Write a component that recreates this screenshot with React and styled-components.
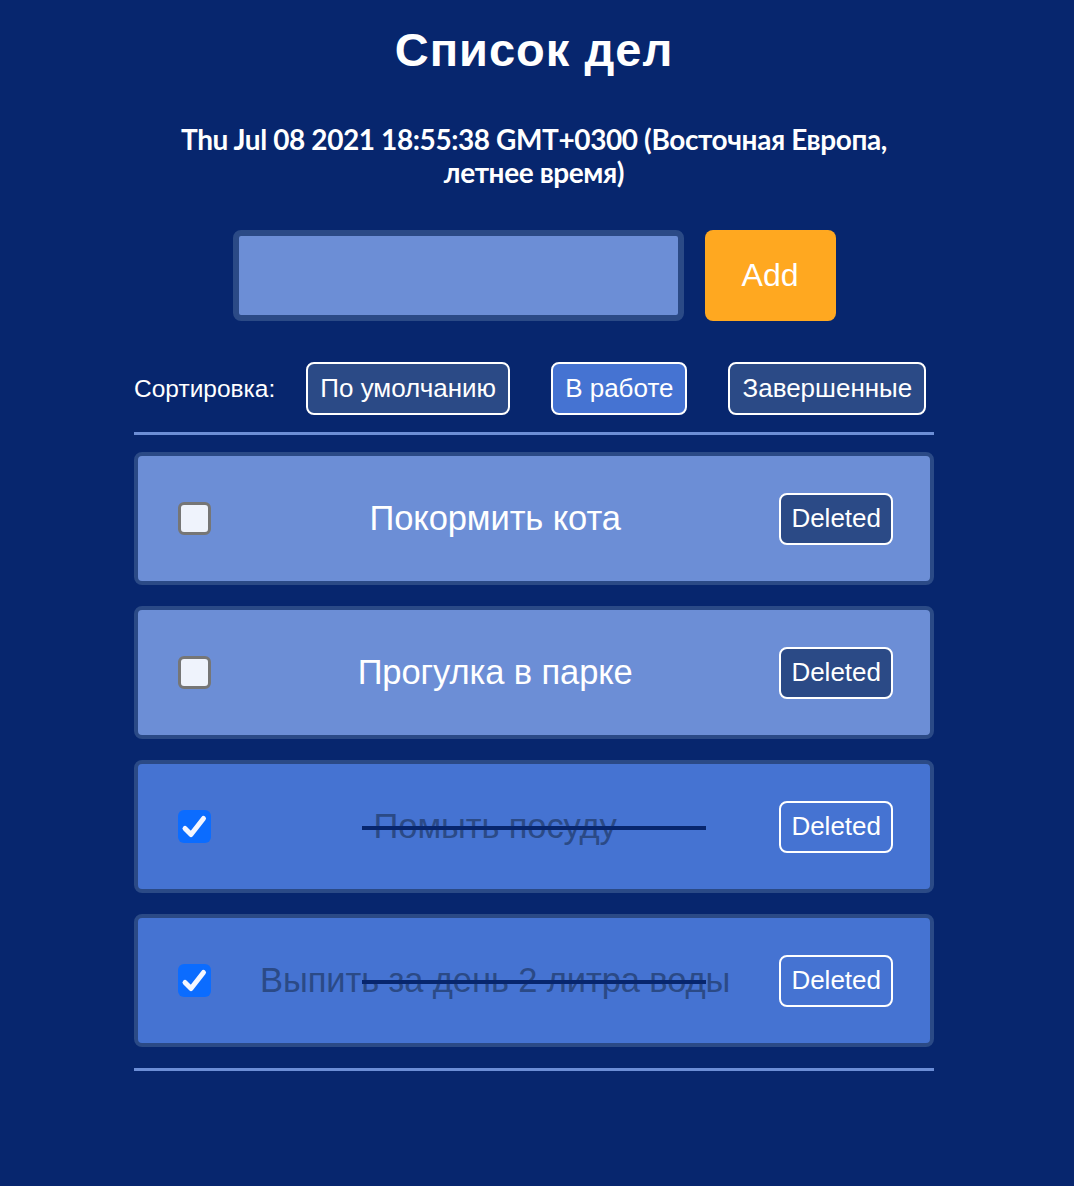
import React from "react";
import styled, { createGlobalStyle } from "styled-components";

const GlobalStyle = createGlobalStyle`
  html, body {
    margin: 0;
    padding: 0;
    background-color: #07266e;
  }
  body {
    font-family: "Liberation Sans", Arial, sans-serif;
    color: white;
  }
`;

const todos = [
  { id: 1, title: "Покормить кота", done: false },
  { id: 2, title: "Прогулка в парке", done: false },
  { id: 3, title: "Помыть посуду", done: true },
  { id: 4, title: "Выпить за день 2 литра воды", done: true },
];

function Checkbox({ checked }) {
  return (
    <CheckBox $checked={checked}>
      {checked && (
        <svg width="33" height="33" viewBox="0 0 33 33">
          <path
            d="M7 18.5 L13 24.5 L25.5 8.5"
            fill="none"
            stroke="#f4f6ff"
            strokeWidth="5"
            strokeLinecap="round"
            strokeLinejoin="round"
          />
        </svg>
      )}
    </CheckBox>
  );
}

function App() {
  return (
    <Page>
      <GlobalStyle />
      <Container>
        <Title>Список дел</Title>
        <DateText>
          Thu Jul 08 2021 18:55:38 GMT+0300 (Восточная Европа, летнее время)
        </DateText>

        <AddRow>
          <TodoInput type="text" />
          <AddBtn>Add</AddBtn>
        </AddRow>

        <SortRow>
          <SortLabel>Сортировка:</SortLabel>
          <SortBtn>По умолчанию</SortBtn>
          <SortBtn $active>В работе</SortBtn>
          <SortBtn>Завершенные</SortBtn>
        </SortRow>

        <Divider $top={17} />

        <List>
          {todos.map((todo) => (
            <Item key={todo.id} $done={todo.done}>
              <Checkbox checked={todo.done} />
              <ItemText $done={todo.done}>{todo.title}</ItemText>
              <DeleteBtn $done={todo.done}>Deleted</DeleteBtn>
            </Item>
          ))}
        </List>

        <Divider $top={0} />
      </Container>
    </Page>
  );
}

export default App;

const Page = styled.div`
  width: calc(100% - 6px);
  min-height: 1186px;
  background-color: #07266e;
`;

const Container = styled.div`
  width: 800px;
  margin: 0 auto;
  display: flex;
  flex-direction: column;
  align-items: center;
`;

const Title = styled.h1`
  margin: 24px 0 0;
  font-family: "Liberation Sans", Arial, sans-serif;
  font-size: 47px;
  line-height: 52px;
  font-weight: 700;
  letter-spacing: 1px;
`;

const DateText = styled.p`
  margin: 47px 0 0;
  max-width: 730px;
  text-align: center;
  font-family: Lato, "Liberation Sans", sans-serif;
  font-weight: 700;
  font-size: 28px;
  line-height: 33px;
  letter-spacing: -0.4px;
`;

const AddRow = styled.div`
  margin-top: 41px;
  display: flex;
  gap: 21px;
`;

const TodoInput = styled.input`
  box-sizing: border-box;
  width: 451px;
  height: 91px;
  border: 6px solid #2b4a86;
  border-radius: 8px;
  background-color: #6c8ed6;
  outline: none;
`;

const AddBtn = styled.button`
  width: 131px;
  height: 91px;
  border: none;
  border-radius: 8px;
  background-color: #ffa820;
  color: white;
  font-family: "Liberation Sans", Arial, sans-serif;
  font-size: 32px;
  cursor: pointer;
`;

const SortRow = styled.div`
  align-self: stretch;
  margin-top: 41px;
  display: flex;
  align-items: center;
  gap: 41px;
`;

const SortLabel = styled.span`
  font-size: 24.5px;
  margin-right: -10px;
`;

const SortBtn = styled.button`
  box-sizing: border-box;
  height: 53px;
  padding: 0 12px;
  border: 2px solid white;
  border-radius: 8px;
  background-color: ${(p) => (p.$active ? "#4573d2" : "#2b4a86")};
  color: white;
  font-family: "Liberation Sans", Arial, sans-serif;
  font-size: 26px;
  cursor: pointer;
`;

const Divider = styled.div`
  align-self: stretch;
  height: 3px;
  margin-top: ${(p) => p.$top}px;
  background-color: #6c8ed6;
`;

const List = styled.div`
  align-self: stretch;
  margin: 17px 0 21px;
  display: flex;
  flex-direction: column;
  gap: 21px;
`;

const Item = styled.div`
  box-sizing: border-box;
  height: 133px;
  padding: 0 37px 0 40px;
  border: 4px solid #2b4a86;
  border-radius: 8px;
  background-color: ${(p) => (p.$done ? "#4573d2" : "#6c8ed6")};
  display: flex;
  align-items: center;
`;

const CheckBox = styled.span`
  box-sizing: border-box;
  width: 33px;
  height: 33px;
  flex-shrink: 0;
  border-radius: 6px;
  border: ${(p) => (p.$checked ? "none" : "3px solid #767676")};
  background-color: ${(p) => (p.$checked ? "#0b6cff" : "#eff3fc")};
  display: flex;
  align-items: center;
  justify-content: center;
`;

const ItemText = styled.p`
  position: relative;
  flex: 1;
  margin: 0;
  text-align: center;
  font-size: 34.5px;
  letter-spacing: -0.1px;
  color: ${(p) => (p.$done ? "#2b4a86" : "white")};

  &::after {
    content: "";
    display: ${(p) => (p.$done ? "block" : "none")};
    position: absolute;
    left: 151px;
    top: 50%;
    width: 344px;
    height: 4px;
    margin-top: -1px;
    background-color: #07266e;
  }
`;

const DeleteBtn = styled.button`
  box-sizing: border-box;
  height: 52px;
  padding: 0 10px;
  border: 2px solid white;
  border-radius: 8px;
  background-color: ${(p) => (p.$done ? "transparent" : "#2b4a86")};
  color: white;
  font-family: "Liberation Sans", Arial, sans-serif;
  font-size: 26px;
  cursor: pointer;
`;
